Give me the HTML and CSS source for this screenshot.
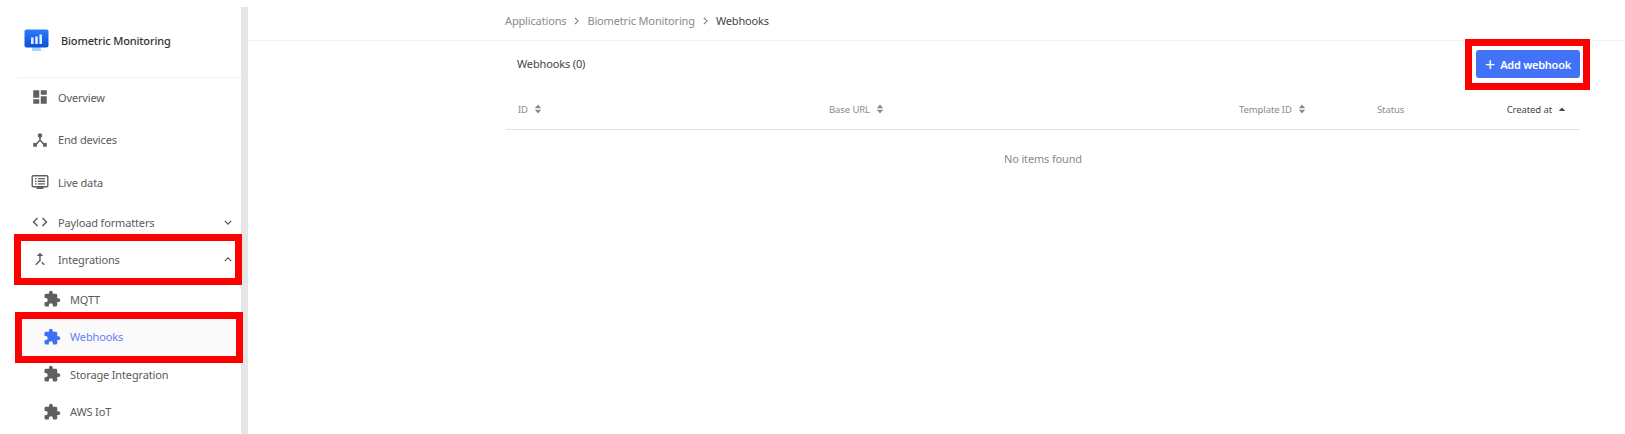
FILE: index.html
```html
<!DOCTYPE html>
<html lang="en">
<head>
    <meta charset="UTF-8">
    <title>Webhooks</title>
    <link rel="stylesheet" href="styles.css">
</head>
<body>
    <svg class="icon-defs" width="0" height="0">
        <symbol id="puzzle" viewBox="0 0 24 24"><path d="M20.5 11H19V7c0-1.1-.9-2-2-2h-4V3.5C13 2.12 11.88 1 10.5 1S8 2.12 8 3.5V5H4c-1.1 0-1.99.9-1.99 2v3.8H3.5c1.49 0 2.7 1.21 2.7 2.7s-1.21 2.7-2.7 2.7H2V20c0 1.1.9 2 2 2h3.8v-1.5c0-1.49 1.21-2.7 2.7-2.7 1.49 0 2.7 1.21 2.7 2.7V22H17c1.1 0 2-.9 2-2v-4h1.5c1.38 0 2.5-1.12 2.5-2.5S21.88 11 20.5 11z"/></symbol>
        <symbol id="sort" viewBox="0 0 10 12"><path d="M5 0.5L9 5H1zM5 11.5L1 7h8z"/></symbol>
    </svg>

    <aside class="sidebar">
        <div class="app-title">
            <svg class="logo" viewBox="0 0 25 23">
                <defs>
                    <linearGradient id="screen" x1="0" y1="0" x2="0" y2="1">
                        <stop offset="0" stop-color="#2f7bf5"/>
                        <stop offset="1" stop-color="#0b4fd8"/>
                    </linearGradient>
                </defs>
                <path d="M9 17h7l1.5 5h-10z" fill="#a9d4f5"/>
                <rect x="0.5" y="0.5" width="24" height="18" rx="2" fill="url(#screen)"/>
                <path d="M7 8.5h2.6V15H7zM11.2 7.5h2.6V15h-2.6zM15.4 5.5H18V15h-2.6z" fill="#dcecff"/>
            </svg>
            <span>Biometric Monitoring</span>
        </div>
        <nav class="nav">
            <a class="nav-item tall">
                <svg class="nav-icon" viewBox="0 0 24 24"><path d="M3 13h8V3H3v10zm0 8h8v-6H3v6zm10 0h8V11h-8v10zm0-18v6h8V3h-8z"/></svg>
                Overview
            </a>
            <a class="nav-item tall">
                <svg class="nav-icon" viewBox="0 0 24 24"><path d="M17 16l-4-4V8.82C14.16 8.4 15 7.3 15 6c0-1.66-1.34-3-3-3S9 4.34 9 6c0 1.3.84 2.4 2 2.82V12l-4 4H3v5h5v-3.05l4-4.2 4 4.2V21h5v-5h-4z"/></svg>
                End devices
            </a>
            <a class="nav-item tall">
                <svg class="nav-icon" viewBox="0 0 18 18"><path d="M2.2 2h13.6c.9 0 1.7.8 1.7 1.7v9.1c0 .9-.8 1.7-1.700 1.700h-3.300v1.600h-7v-1.600H2.200c-.9 0-1.700-.8-1.700-1.700V3.700C.5 2.800 1.300 2 2.200 2zm0 1.400c-.2 0-.3.100-.3.300v9.100c0 .2.100.3.300.3h13.600c.2 0 .3-.1.300-.3V3.700c0-.2-.1-.3-.3-.3zM4 5h1.500v1.300H4zm2.800 0H14v1.300H6.800zM4 7.600h1.500v1.300H4zm2.800 0H14v1.300H6.800zM4 10.200h1.500v1.300H4zm2.800 0H14v1.300H6.800z"/></svg>
                Live data
            </a>
            <a class="nav-item">
                <svg class="nav-icon" viewBox="0 0 24 24"><path d="M9.400 16.600L4.800 12l4.600-4.600L8 6l-6 6 6 6 1.400-1.400zm5.200 0l4.600-4.600-4.600-4.600L16 6l6 6-6 6-1.400-1.400z"/></svg>
                Payload formatters
                <svg class="chevron" viewBox="0 0 10 6"><path d="M1 1l4 4 4-4"/></svg>
            </a>
            <a class="nav-item integrations">
                <svg class="nav-icon" viewBox="0 0 24 24"><path d="M17 20.410L18.410 19 15 15.590 13.590 17 17 20.410zM7.500 8H11v5.590L5.590 19 7 20.410l6-6V8h3.500L12 3.500 7.500 8z"/></svg>
                Integrations
                <svg class="chevron" viewBox="0 0 10 6"><path d="M1 5l4-4 4 4"/></svg>
            </a>
            <div class="submenu">
                <a class="nav-item sub"><svg class="nav-icon"><use href="#puzzle"/></svg>MQTT</a>
                <a class="nav-item sub active"><svg class="nav-icon"><use href="#puzzle"/></svg>Webhooks</a>
                <a class="nav-item sub"><svg class="nav-icon"><use href="#puzzle"/></svg>Storage Integration</a>
                <a class="nav-item sub"><svg class="nav-icon"><use href="#puzzle"/></svg>AWS IoT</a>
            </div>
        </nav>
    </aside>
    <div class="sidebar-scroll"></div>

    <main class="main">
        <div class="breadcrumbs">
            <span>Applications</span>
            <svg class="crumb-sep" viewBox="0 0 6 10"><path d="M1 1l4 4-4 4"/></svg>
            <span>Biometric Monitoring</span>
            <svg class="crumb-sep" viewBox="0 0 6 10"><path d="M1 1l4 4-4 4"/></svg>
            <span class="current">Webhooks</span>
        </div>
        <section class="content">
            <div class="toolbar">
                <span class="count">Webhooks (0)</span>
                <button class="add-btn"><span class="plus">+</span>Add webhook</button>
            </div>
            <div class="table-head">
                <span class="col">ID <svg class="sort"><use href="#sort"/></svg></span>
                <span class="col">Base URL <svg class="sort"><use href="#sort"/></svg></span>
                <span class="col">Template ID <svg class="sort"><use href="#sort"/></svg></span>
                <span class="col">Status</span>
                <span class="col sorted">Created at <svg class="sort-up" viewBox="0 0 10 6"><path d="M5 .5L9 5H1z"/></svg></span>
            </div>
            <p class="empty">No items found</p>
        </section>
    </main>

    <!-- annotation boxes from the screenshot -->
    <div class="mark mark-integrations"></div>
    <div class="mark mark-webhooks"></div>
    <div class="mark mark-add"></div>
</body>
</html>
```

FILE: styles.css
```css
* {
    box-sizing: border-box;
}

html, body {
    height: 100%;
}

body {
    margin: 0;
    display: flex;
    height: 434px;
    overflow: hidden;
    background: #fff;
    font-family: "Noto Sans", "Open Sans", sans-serif;
    font-size: 11px;
    letter-spacing: -0.15px;
    color: #5a5a5a;
}

.icon-defs {
    position: absolute;
}

.sidebar {
    width: 241px;
    flex: none;
}

.sidebar-scroll {
    width: 7px;
    flex: none;
    margin-top: 7px;
    background: #e6e6e6;
}

.app-title {
    display: flex;
    align-items: center;
    gap: 12px;
    height: 78px;
    margin-left: 17px;
    padding: 4px 0 0 7px;
    border-bottom: 1px solid #f2f2f2;
    font-weight: 500;
    color: #333;
}

.logo {
    width: 25px;
    height: 23px;
}

.nav {
    margin-top: -2px;
}

.nav-item {
    display: flex;
    align-items: center;
    height: 37.500px;
    padding: 0 9px 0 31px;
}

.nav-item.tall {
    height: 42.500px;
}

.nav-item.integrations {
    height: 36.500px;
}

.nav-icon {
    width: 18px;
    height: 18px;
    margin-right: 9px;
    fill: #5f5f5f;
}

.chevron {
    width: 8px;
    height: 5px;
    margin-left: auto;
    fill: none;
    stroke: #555;
    stroke-width: 1.500;
}

.submenu {
    padding-top: 3px;
}

.sub {
    padding-left: 43px;
}

.active {
    margin: 0 2px 0 20px;
    padding-left: 23px;
    background: #fafafa;
    color: #6580f5;
}

.active .nav-icon {
    fill: #3f6ff5;
}

.main {
    flex: 1;
    min-width: 0;
}

.breadcrumbs {
    display: flex;
    align-items: center;
    gap: 8px;
    height: 41px;
    padding-left: 257px;
    border-bottom: 1px solid #f2f2f2;
    color: #8a8a8a;
}

.crumb-sep {
    width: 5px;
    height: 8px;
    margin-top: 2px;
    fill: none;
    stroke: #777;
    stroke-width: 1.300;
}

.breadcrumbs .current {
    color: #444;
}

.content {
    margin: 0 45px 0 258px;
}

.toolbar {
    display: flex;
    align-items: center;
    justify-content: space-between;
    height: 46px;
    padding: 0 0 0 11px;
}

.count {
    margin-top: -2px;
    color: #444;
}

.add-btn {
    display: flex;
    align-items: center;
    justify-content: center;
    width: 104px;
    height: 28px;
    border: 0;
    border-radius: 3px;
    background: #4272f7;
    color: #fff;
    font: 600 11px "Noto Sans", sans-serif;
    letter-spacing: -0.25px;
}

.plus {
    margin-right: 5px;
    font-size: 18px;
    font-weight: 400;
    line-height: 1;
}

.table-head {
    display: grid;
    grid-template-columns: 311px 410px 138px 1fr 120px;
    align-items: center;
    height: 43px;
    padding: 2px 14px 0 12px;
    border-bottom: 1px solid #e2e2e2;
    font-size: 9.500px;
    letter-spacing: -0.1px;
    color: #8a8a8a;
}

.col {
    display: flex;
    align-items: center;
    gap: 6px;
}

.sort {
    width: 8px;
    height: 10px;
    fill: #8a8a8a;
}

.sorted {
    justify-content: flex-end;
    color: #444;
}

.sort-up {
    width: 8px;
    height: 5px;
    fill: #444;
}

.empty {
    margin: 0;
    padding-top: 21px;
    text-align: center;
    color: #8a8a8a;
}

.mark {
    position: absolute;
    border: 7px solid #f00;
}

.mark-integrations {
    left: 14px;
    top: 234px;
    width: 228px;
    height: 51px;
}

.mark-webhooks {
    left: 15px;
    top: 312px;
    width: 228px;
    height: 51px;
}

.mark-add {
    left: 1465px;
    top: 39px;
    width: 125px;
    height: 51px;
}
```
